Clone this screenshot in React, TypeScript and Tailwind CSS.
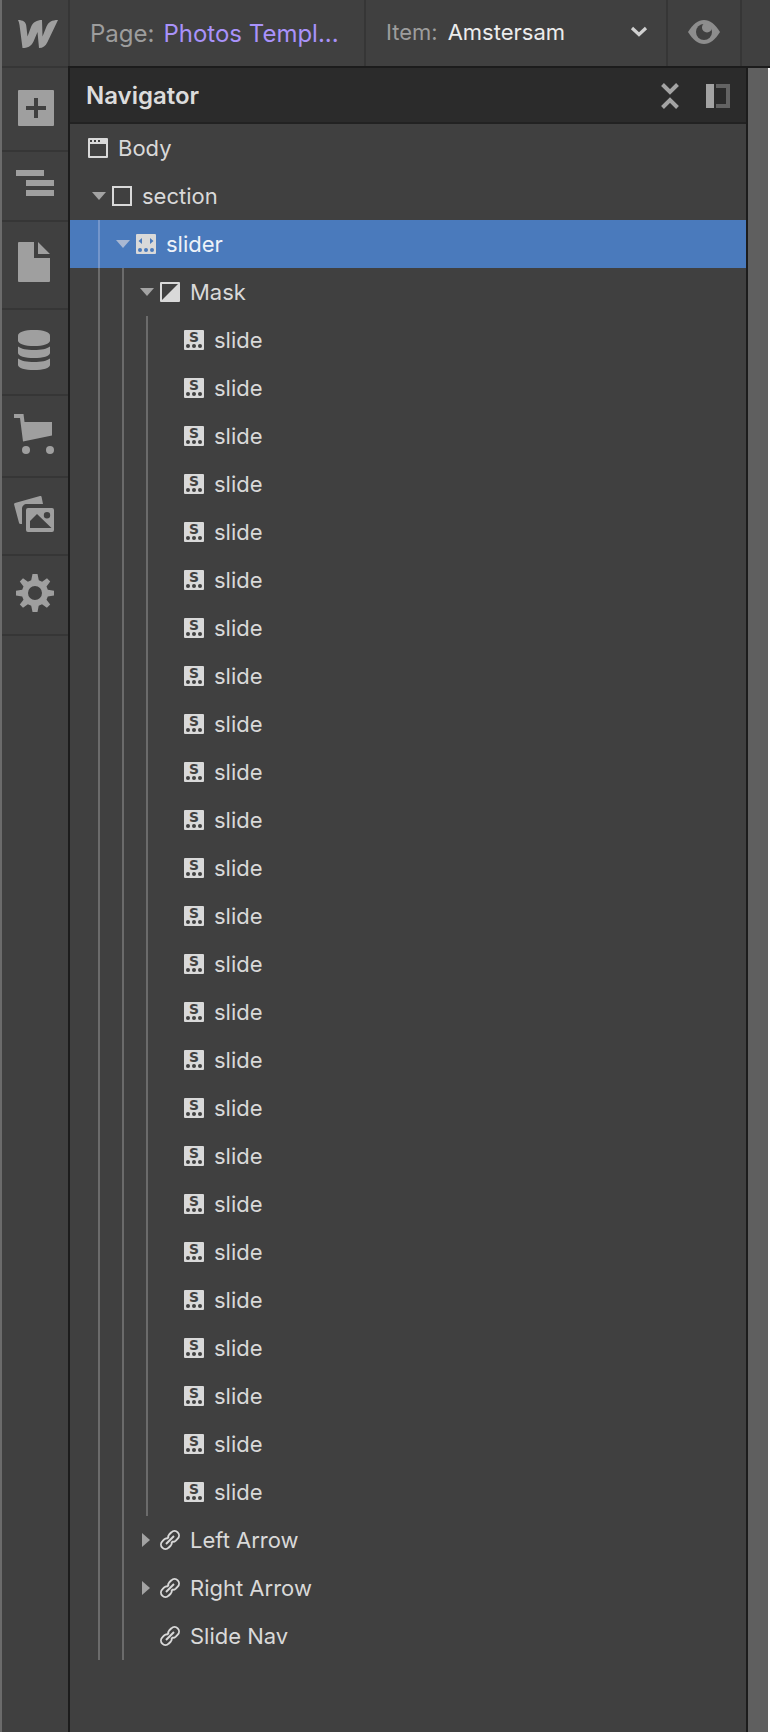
import type { ReactNode } from 'react'

type NodeKind = 'body' | 'section' | 'slider' | 'mask' | 'slide' | 'link'

interface TreeNode {
  label: string
  kind: NodeKind
  depth: number
  arrow?: 'open' | 'closed'
  selected?: boolean
}

const slides: TreeNode[] = Array.from({ length: 25 }, () => ({ label: 'slide', kind: 'slide', depth: 4 }))

const nodes: TreeNode[] = [
  { label: 'Body', kind: 'body', depth: 0 },
  { label: 'section', kind: 'section', depth: 1, arrow: 'open' },
  { label: 'slider', kind: 'slider', depth: 2, arrow: 'open', selected: true },
  { label: 'Mask', kind: 'mask', depth: 3, arrow: 'open' },
  ...slides,
  { label: 'Left Arrow', kind: 'link', depth: 3, arrow: 'closed' },
  { label: 'Right Arrow', kind: 'link', depth: 3, arrow: 'closed' },
  { label: 'Slide Nav', kind: 'link', depth: 3 },
]

function NodeIcon({ kind }: { kind: NodeKind }) {
  return (
    <svg width="20" height="20" viewBox="0 0 20 20" className="block shrink-0" fill="#d9d9d9">
      {kind === 'body' && (
        <path
          fillRule="evenodd"
          d="M1 0h18a1 1 0 0 1 1 1v18a1 1 0 0 1-1 1H1a1 1 0 0 1-1-1V1a1 1 0 0 1 1-1zM2 6v12h16V6zM2 2v2h2V2zm4 0v2h2V2zm4 0v2h2V2z"
        />
      )}
      {kind === 'section' && <path fillRule="evenodd" d="M0 0h20v20H0zM2 2v16h16V2z" />}
      {kind === 'slider' && (
        <>
          <rect width="20" height="20" rx="1" />
          <path d="M6 4v6L2.500 7zM14 4v6l3.500-3z" fill="#4a7abc" />
          <circle cx="4" cy="16" r="2" fill="#4a7abc" />
          <circle cx="10" cy="16" r="2" fill="#4a7abc" />
          <circle cx="16" cy="16" r="2" fill="#4a7abc" />
        </>
      )}
      {kind === 'mask' && (
        <path
          fillRule="evenodd"
          d="M1 0h18a1 1 0 0 1 1 1v18a1 1 0 0 1-1 1H1a1 1 0 0 1-1-1V1a1 1 0 0 1 1-1zM2 2v16L18 2z"
        />
      )}
      {kind === 'slide' && (
        <>
          <rect width="20" height="20" rx="1" />
          <text
            x="10"
            y="12"
            textAnchor="middle"
            textLength="10"
            lengthAdjust="spacingAndGlyphs"
            className="font-['DejaVu_Sans',sans-serif] text-[13.5px] font-bold"
            fill="#404040"
          >
            S
          </text>
          <circle cx="4" cy="16" r="2" fill="#404040" />
          <circle cx="10" cy="16" r="2" fill="#404040" />
          <circle cx="16" cy="16" r="2" fill="#404040" />
        </>
      )}
      {kind === 'link' && (
        <g fill="none" stroke="#d9d9d9" strokeWidth="1.900">
          <path d="M8.300 8.500C7.900 6.600 8.300 5.300 9.400 4.200L11.400 2.300A4.300 4.300 0 0 1 17.700 8.600L15.800 10.600C14.700 11.700 13.200 12 11.700 11.700" />
          <path d="M11.700 11.500C12.100 13.400 11.700 14.700 10.600 15.800L8.600 17.700A4.300 4.300 0 0 1 2.300 11.400L4.200 9.400C5.300 8.300 6.800 8 8.300 8.300" />
          <path d="M6 14L14 6" />
        </g>
      )}
    </svg>
  )
}

function TreeRow({ node }: { node: TreeNode }) {
  // guide lines only run below expanded ancestors
  const guides = Math.max(node.depth - 1, 0)

  return (
    <div className={`flex h-12 shrink-0 items-center ${node.selected ? 'bg-[#4a7abc]' : ''}`}>
      <div className="w-[17px] shrink-0" />
      {Array.from({ length: node.depth }, (_, i) => (
        <div key={i} className="flex h-full w-6 shrink-0 items-center">
          {i < guides && (
            <div className={`ml-[11px] h-full w-0.5 ${node.selected ? 'bg-[#7496cb]' : 'bg-[#6b6b6b]'}`} />
          )}
          {i === node.depth - 1 && node.arrow === 'open' && (
            <svg width="14" height="8" viewBox="0 0 14 8" className="ml-[5px]">
              <path d="M0 0h14L7 8z" fill={node.selected ? '#a9b8d2' : '#a3a3a3'} />
            </svg>
          )}
          {i === node.depth - 1 && node.arrow === 'closed' && (
            <svg width="8" height="14" viewBox="0 0 8 14" className="ml-[7px]">
              <path d="M0 0l8 7-8 7z" fill="#a3a3a3" />
            </svg>
          )}
        </div>
      ))}
      <div className="ml-px">
        <NodeIcon kind={node.kind} />
      </div>
      <span
        className={`ml-[10px] text-[22px] leading-none whitespace-nowrap ${node.selected ? 'text-[#eef2f8]' : 'text-[#d9d9d9]'}`}
      >
        {node.label}
      </span>
    </div>
  )
}

function SideItem({ className, children }: { className: string; children: ReactNode }) {
  return <div className={`shrink-0 border-b-2 border-[#363636] ${className}`}>{children}</div>
}

function Sidebar() {
  return (
    <aside className="flex w-[68px] shrink-0 flex-col border-l-2 border-[#6b6b6b] text-[#9f9f9f]">
      <SideItem className="h-[68px] pt-5 pl-4">
        <svg width="40" height="28" viewBox="0 0 40 28" fill="currentColor">
          <path d="M0 0C5 0 8 2 8.300 6L9.500 16.500 13 7C15 2 19 0 24 0L24.500 16.500 28.500 6.500C30.500 2 34 0 40 0L29.500 22C27.500 26 25 28 21 28L19.500 12 15.500 21.500C13 26.500 9.500 28 4.500 28L1.500 5C1.200 3 .7 1.500 0 0z" />
        </svg>
      </SideItem>
      <SideItem className="h-[84px] pt-[22px] pl-4">
        <svg width="36" height="36" viewBox="0 0 36 36">
          <rect width="36" height="36" rx="1" fill="currentColor" />
          <path d="M8 18h20M18 8v20" stroke="#404040" strokeWidth="4" />
        </svg>
      </SideItem>
      <SideItem className="h-[70px] pt-[18px] pl-[14px]">
        <svg width="38" height="26" viewBox="0 0 38 26" fill="currentColor">
          <path d="M0 0h28v6H0zM10 10h28v6H10zM10 20h28v6H10z" />
        </svg>
      </SideItem>
      <SideItem className="h-[88px] pt-5 pl-4">
        <svg width="32" height="40" viewBox="0 0 32 40" fill="currentColor">
          <path d="M1 0h15v16h16v23a1 1 0 0 1-1 1H1a1 1 0 0 1-1-1V1a1 1 0 0 1 1-1zM20 0l12 12H20z" />
        </svg>
      </SideItem>
      <SideItem className="h-[86px] pt-5 pl-4">
        <svg width="32" height="40" viewBox="0 0 32 40" fill="currentColor">
          <path d="M0 5.500C0 2 7 0 16 0s16 2 16 5.500v5c0 3.500-7 5.500-16 5.500S0 14 0 10.500z" />
          <path d="M0 16.500c3 2.500 9 3.500 16 3.500s13-1 16-3.500V23c0 3-7 5-16 5S0 26 0 23z" />
          <path d="M0 28.500c3 2.500 9 3.500 16 3.500s13-1 16-3.500V35c0 3-7 5-16 5S0 38 0 35z" />
        </svg>
      </SideItem>
      <SideItem className="h-[82px] pt-[18px] pl-3">
        <svg width="40" height="40" viewBox="0 0 40 40" fill="currentColor">
          <path d="M0 0h9.500l1 8H38v13.500L9 27.500 6 4H0z" />
          <circle cx="12" cy="36" r="4" />
          <circle cx="36" cy="36" r="4" />
        </svg>
      </SideItem>
      <SideItem className="h-[78px] pt-[18px] pl-3">
        <svg width="40" height="36" viewBox="0 0 40 36" fill="currentColor">
          <path d="M1 7L26 0c.8-.2 1.400.1 1.600.9L29 8H13c-3 0-5 2-5 5v15H6.500c-.8 0-1.300-.4-1.500-1.200L.1 8.500C-.1 7.700.3 7.200 1 7z" />
          <path
            fillRule="evenodd"
            d="M14 12h24a2 2 0 0 1 2 2v20a2 2 0 0 1-2 2H14a2 2 0 0 1-2-2V14a2 2 0 0 1 2-2zM16 32h21.500L23 18l-7 7zM33 16a3.200 3.200 0 1 0 0 6.400 3.200 3.200 0 0 0 0-6.400z"
          />
        </svg>
      </SideItem>
      <SideItem className="h-20 pt-[18px] pl-[14px]">
        <svg width="38" height="38" viewBox="0 0 38 38" fill="currentColor">
          <path
            fillRule="evenodd"
            d="M16.500 0h5l1.300 6.300 3.300 1.400L31 4.200 34.200 7.500 30.500 12.500 31.800 15.800 38 16.700v4.700l-6.200 1-1.300 3.300 3.700 4.800-3.300 3.300-4.900-3.500-3.300 1.400L21.500 38h-5l-1.300-6.300-3.300-1.400L7 33.800 3.800 30.500l3.700-4.800-1.300-3.300L0 21.400v-4.700l6.200-.9 1.300-3.300L3.800 7.500 7 4.200l4.900 3.500 3.300-1.400zM19 12a7 7 0 1 0 0 14 7 7 0 0 0 0-14z"
          />
        </svg>
      </SideItem>
    </aside>
  )
}

function TopBar() {
  return (
    <header className="flex h-[68px] shrink-0 border-b-2 border-[#1c1c1c] bg-[#404040]">
      <div className="flex w-[298px] shrink-0 border-x-2 border-[#363636] pt-[19px] pl-5 text-2xl leading-[30px] whitespace-pre">
        <span className="text-[#9d9d9d]">Page:</span>
        <span className="ml-[9px] text-[#a992fa]">Photos Templ...</span>
      </div>
      <div className="flex w-[302px] shrink-0 border-r-2 border-[#363636] pt-[17px] pl-5 text-[22px] leading-[30px]">
        <span className="text-[#9d9d9d]">Item:</span>
        <span className="ml-[10px] text-[#ececec]">Amstersam</span>
        <svg width="18" height="12" viewBox="0 0 18 12" className="mt-[9px] mr-[18px] ml-auto">
          <path d="M2 2l7 6.500L16 2" fill="none" stroke="#d0d0d0" strokeWidth="3.200" />
        </svg>
      </div>
      <div className="w-[74px] shrink-0 border-r-2 border-[#363636] pt-5 pl-5">
        <svg width="32" height="24" viewBox="0 0 32 24">
          <path d="M0 12C5 4 10 0 16 0s11 4 16 12c-5 8-10 12-16 12S5 20 0 12z" fill="#8d8d8d" />
          <circle cx="16" cy="12" r="8" fill="#404040" />
          <circle cx="19" cy="7.500" r="5" fill="#8d8d8d" />
        </svg>
      </div>
    </header>
  )
}

function NavigatorPanel() {
  return (
    <section className="flex w-[680px] shrink-0 flex-col border-x-2 border-[#1c1c1c] bg-[#404040]">
      <div className="flex h-14 shrink-0 items-center border-b-2 border-[#222222] bg-[#2b2b2b] pt-0.5 pl-4">
        <h1 className="text-2xl leading-none font-semibold text-[#dcdcdc]">Navigator</h1>
        <svg width="18" height="26" viewBox="0 0 18 26" className="ml-auto">
          <path d="M1.500 1.500L9 9l7.500-7.500M1.500 24.500L9 17l7.500 7.500" fill="none" stroke="#a3a3a3" strokeWidth="4" />
        </svg>
        <svg width="24" height="24" viewBox="0 0 24 24" className="mr-4 ml-[27px]">
          <path d="M0 0h8v24H0z" fill="#a3a3a3" />
          <path d="M10 2h12v20H10" fill="none" stroke="#636363" strokeWidth="4" />
        </svg>
      </div>
      {nodes.map((node, i) => (
        <TreeRow key={i} node={node} />
      ))}
    </section>
  )
}

export default function App() {
  return (
    <div className="flex h-[1732px] w-[770px] overflow-hidden bg-[#404040] font-['Inter',sans-serif]">
      <Sidebar />
      <div className="flex min-w-0 flex-1 flex-col">
        <TopBar />
        <div className="flex flex-1">
          <NavigatorPanel />
          <div className="flex-1 border-r-2 border-white bg-[#5f5f5f]" />
        </div>
      </div>
    </div>
  )
}
